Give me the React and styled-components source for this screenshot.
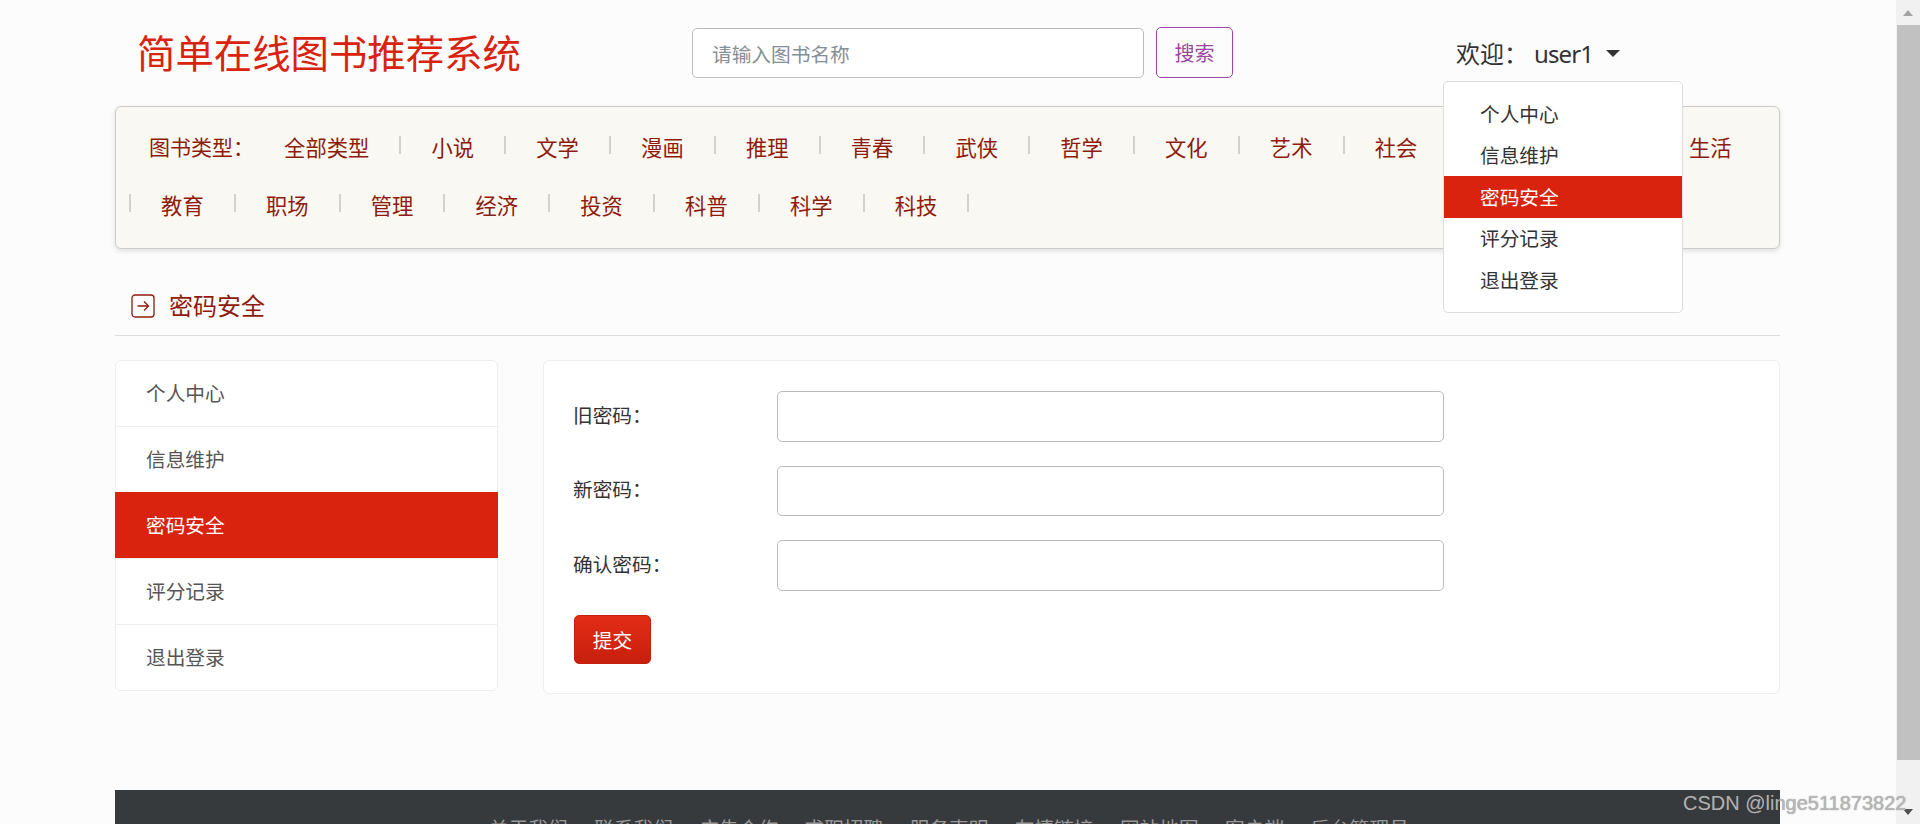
import React from "react";
import styled, { createGlobalStyle } from "styled-components";

const Global = createGlobalStyle`
  html, body { margin: 0; padding: 0; height: 824px; overflow: hidden; background: #fcfcfc; }
  * { box-sizing: border-box; }
  body { font-family: "Noto Sans", "Noto Sans CJK SC", sans-serif; color: #333; }
`;

const Frame = styled.div`
  position: relative;
  display: flex;
  width: 1920px;
  height: 824px;
  overflow: hidden;
`;
const Page = styled.div`
  width: 1896px;
  padding: 0 116px 0 115px;
  background: #fcfcfc;
`;
const Header = styled.header`
  display: flex;
  align-items: center;
  height: 106px;
`;
const Logo = styled.h1`
  width: 577px;
  margin: 0;
  padding-left: 22px;
  font-size: 38.4px;
  font-weight: 400;
  line-height: 50px;
  color: #d9230f;
`;
const SearchForm = styled.form`
  display: flex;
  align-items: flex-end;
  gap: 12px;
  margin-top: -1px;
`;
const SearchInput = styled.input`
  width: 452px;
  height: 50px;
  padding: 0 19px;
  border: 1px solid #bbb;
  border-radius: 5px;
  background: #fff;
  font: 19.7px "Noto Sans CJK SC", sans-serif;
  &::placeholder { color: #868e96; opacity: 1; }
`;
const SearchButton = styled.button`
  width: 77px;
  height: 51px;
  padding: 0;
  border: 1px solid #9b479f;
  border-radius: 5px;
  background: transparent;
  color: #9b479f;
  font: 20px "Noto Sans CJK SC", sans-serif;
`;
const UserBlock = styled.div`
  position: relative;
  display: flex;
  align-items: center;
  margin-left: 223px;
  margin-top: 2px;
  height: 36px;
  font-size: 24px;
  line-height: 36px;
  color: #333;
`;
const UserName = styled.span`
  margin-left: 6px;
  letter-spacing: -0.9px;
`;
const Caret = styled.span`
  width: 0;
  height: 0;
  margin-left: 13px;
  margin-top: -2px;
  border-top: 7px solid #333;
  border-left: 7px solid transparent;
  border-right: 7px solid transparent;
`;
const Menu = styled.ul`
  position: absolute;
  z-index: 5;
  top: 45px;
  left: -13px;
  width: 240px;
  height: 232px;
  margin: 0;
  padding: 11px 0 0;
  list-style: none;
  background: #fff;
  border: 1px solid #ddd;
  border-radius: 5px;
`;
const MenuItem = styled.li`
  display: flex;
  align-items: center;
  height: 41.5px;
  padding: 2px 0 0 36px;
  font-size: 19.7px;
  color: ${(p) => (p.$active ? "#fff" : "#333")};
  background: ${(p) => (p.$active ? "#d9230f" : "transparent")};
`;
const NavPanel = styled.nav`
  display: flex;
  flex-wrap: wrap;
  align-content: flex-start;
  height: 143px;
  padding: 10px 16px 0 13px;
  background: #f9f8f2;
  border: 1px solid #ccc;
  border-radius: 6px;
  box-shadow: 0 2px 5px rgba(0, 0, 0, 0.12);
`;
const NavLabel = styled.span`
  display: flex;
  align-items: center;
  height: 58px;
  margin-left: 20px;
  font-size: 21px;
  color: #8f1b0c;
`;
const NavLink = styled.a`
  display: flex;
  align-items: center;
  height: 58px;
  padding: 0 30.1px;
  font-size: 21.3px;
  color: #8f1b0c;
`;
const NavSep = styled.span`
  width: 2px;
  height: 18px;
  margin-top: 19px;
  background: #d2d2d0;
`;
const TitleBar = styled.div`
  display: flex;
  align-items: center;
  gap: 14px;
  height: 87px;
  padding: 39px 0 11px 16px;
  border-bottom: 1px solid #ddd;
`;
const TitleText = styled.h2`
  margin: 0;
  font-size: 24px;
  font-weight: 400;
  line-height: 36px;
  color: #8f1b0c;
`;
const Content = styled.div`
  display: flex;
  align-items: flex-start;
  gap: 45px;
  margin-top: 24px;
`;
const SideList = styled.ul`
  width: 383px;
  margin: 0;
  padding: 0;
  list-style: none;
`;
const SideItem = styled.li`
  display: flex;
  align-items: center;
  height: 67px;
  margin-top: -1px;
  padding: 0 0 3px 30px;
  font-size: 19.7px;
  color: ${(p) => (p.$active ? "#fff" : "#555")};
  background: ${(p) => (p.$active ? "#d9230f" : "#fff")};
  border: 1px solid ${(p) => (p.$active ? "#d9230f" : "#eee")};
  &:first-child { margin-top: 0; border-radius: 6px 6px 0 0; }
  &:last-child { border-radius: 0 0 6px 6px; }
`;
const FormCard = styled.form`
  flex: 1;
  height: 334px;
  padding: 30px 29px 0;
  background: #fff;
  border: 1px solid #eee;
  border-radius: 6px;
`;
const FormRow = styled.div`
  display: flex;
  align-items: center;
  margin-bottom: 24px;
`;
const FormLabel = styled.label`
  width: 204px;
  padding-bottom: 4px;
  font-size: 19.7px;
  color: #333;
`;
const FormInput = styled.input`
  width: 667px;
  height: 50.5px;
  border: 1px solid #bbb;
  border-radius: 5px;
  background: #fff;
`;
const SubmitButton = styled.button`
  width: 77px;
  height: 49px;
  margin-left: 1px;
  padding: 0;
  border: 1px solid #c4200d;
  border-radius: 5px;
  background: linear-gradient(#e22c16, #c7200e);
  color: #fff;
  font: 19.7px "Noto Sans CJK SC", sans-serif;
`;
const Footer = styled.footer`
  display: flex;
  justify-content: center;
  gap: 26.4px;
  height: 120px;
  margin-top: 96px;
  padding: 24px 0 0 3px;
  background: #373a3c;
  font-size: 19.7px;
  line-height: 30px;
  color: #999;
`;
const Scrollbar = styled.aside`
  display: flex;
  flex-direction: column;
  width: 24px;
  height: 824px;
  background: #f1f1f1;
`;
const ScrollButton = styled.div`
  display: flex;
  justify-content: center;
  align-items: center;
  height: ${(p) => p.$height}px;
`;
const ArrowUp = styled.span`
  width: 0;
  height: 0;
  border-bottom: 6px solid #a3a3a3;
  border-left: 5.5px solid transparent;
  border-right: 5.5px solid transparent;
`;
const ArrowDown = styled.span`
  width: 0;
  height: 0;
  border-top: 6px solid #505050;
  border-left: 5.5px solid transparent;
  border-right: 5.5px solid transparent;
`;
const Thumb = styled.div`
  height: 735px;
  margin-left: 1px;
  background: #c1c1c1;
`;
const Spacer = styled.div`
  flex: 1;
`;
const Watermark = styled.div`
  position: absolute;
  z-index: 10;
  left: 1683px;
  top: 790px;
  font-family: "Liberation Sans", sans-serif;
  font-size: 20px;
  line-height: 26px;
  white-space: nowrap;
  color: rgba(190, 190, 190, 0.9);
  text-shadow: 0 0 1px rgba(90, 90, 90, 0.8);
`;

const cats = ["全部类型","小说","文学","漫画","推理","青春","武侠","哲学","文化","艺术","社会","心理","历史","生活","教育","职场","管理","经济","投资","科普","科学","科技"];
const menu = ["个人中心","信息维护","密码安全","评分记录","退出登录"];
const fields = ["旧密码：","新密码：","确认密码："];
const links = ["关于我们","联系我们","广告合作","求职招聘","服务声明","友情链接","网站地图","客户端","后台管理员"];

const TitleIcon = () => (
  <svg width="24" height="24" viewBox="0 0 24 24" fill="none" stroke="#8f1b0c" strokeWidth="1.3">
    <rect x="1" y="1" width="22" height="22" rx="3" />
    <path d="M6.5 12h11M13 7.5l4.5 4.5-4.5 4.5" />
  </svg>
);

export default function App() {
  return (
    <Frame>
      <Global />
      <Page>
        <Header>
          <Logo>简单在线图书推荐系统</Logo>
          <SearchForm>
            <SearchInput placeholder="请输入图书名称" />
            <SearchButton type="button">搜索</SearchButton>
          </SearchForm>
          <UserBlock>
            欢迎：
            <UserName>user1</UserName>
            <Caret />
            <Menu>
              {menu.map((m, i) => (
                <MenuItem key={m} $active={i === 2}>{m}</MenuItem>
              ))}
            </Menu>
          </UserBlock>
        </Header>
        <NavPanel>
          <NavLabel>图书类型：</NavLabel>
          {cats.map((c) => (
            <React.Fragment key={c}>
              <NavLink>{c}</NavLink>
              <NavSep />
            </React.Fragment>
          ))}
        </NavPanel>
        <TitleBar>
          <TitleIcon />
          <TitleText>密码安全</TitleText>
        </TitleBar>
        <Content>
          <SideList>
            {menu.map((m, i) => (
              <SideItem key={m} $active={i === 2}>{m}</SideItem>
            ))}
          </SideList>
          <FormCard>
            {fields.map((f) => (
              <FormRow key={f}>
                <FormLabel>{f}</FormLabel>
                <FormInput type="password" />
              </FormRow>
            ))}
            <SubmitButton type="button">提交</SubmitButton>
          </FormCard>
        </Content>
        <Footer>
          {links.map((l) => (
            <span key={l}>{l}</span>
          ))}
        </Footer>
      </Page>
      <Scrollbar>
        <ScrollButton $height={25}><ArrowUp /></ScrollButton>
        <Thumb />
        <Spacer />
        <ScrollButton $height={24}><ArrowDown /></ScrollButton>
      </Scrollbar>
      <Watermark>CSDN @linge511873822</Watermark>
    </Frame>
  );
}
